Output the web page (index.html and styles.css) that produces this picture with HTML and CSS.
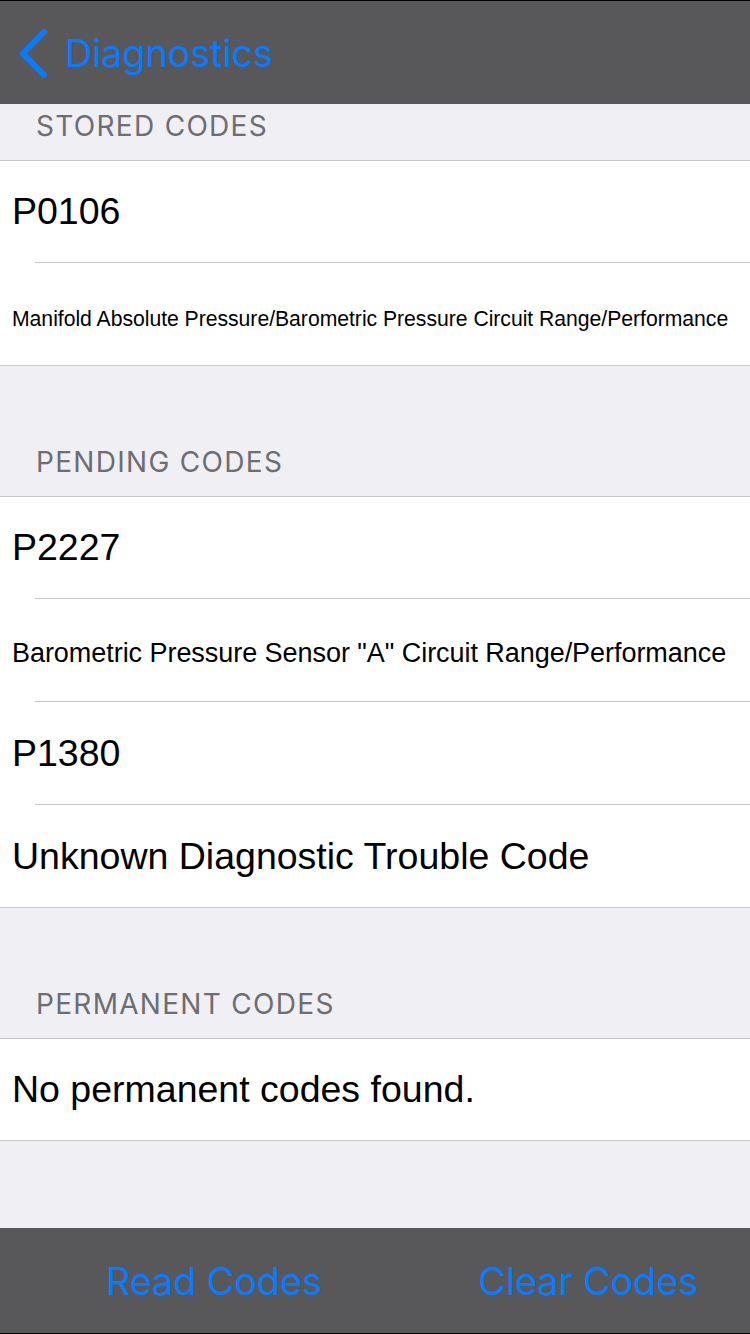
FILE: index.html
```html
<!DOCTYPE html>
<html>
<head>
<meta charset="utf-8">
<link rel="stylesheet" href="styles.css">
</head>
<body>
<div class="screen">
  <header class="navbar">
    <svg class="chevron" width="34" height="52" viewBox="0 0 34 52">
      <path d="M27 4 L6 25.5 L27 47" fill="none" stroke="#0a7aff" stroke-width="6" stroke-linecap="round" stroke-linejoin="round"/>
    </svg>
    <span class="nav-title">Diagnostics</span>
  </header>
  <main class="content">
    <div class="section-header first">STORED CODES</div>
    <div class="group">
      <div class="cell"><span class="code">P0106</span></div>
      <div class="cell desc-cell-a"><span class="desc desc-a">Manifold Absolute Pressure/Barometric Pressure Circuit Range/Performance</span></div>
    </div>
    <div class="section-header">PENDING CODES</div>
    <div class="group">
      <div class="cell"><span class="code">P2227</span></div>
      <div class="cell desc-cell-b"><span class="desc desc-b">Barometric Pressure Sensor "A" Circuit Range/Performance</span></div>
      <div class="cell"><span class="code">P1380</span></div>
      <div class="cell"><span class="code">Unknown Diagnostic Trouble Code</span></div>
    </div>
    <div class="section-header">PERMANENT CODES</div>
    <div class="group">
      <div class="cell"><span class="code">No permanent codes found.</span></div>
    </div>
  </main>
  <footer class="toolbar">
    <span class="tool-btn">Read Codes</span>
    <span class="tool-btn">Clear Codes</span>
  </footer>
</div>
</body>
</html>
```
FILE: styles.css
```css
html, body {
  margin: 0;
  padding: 0;
}
body {
  width: 750px;
  height: 1334px;
  overflow: hidden;
  background: #efeff4;
}
.screen {
  width: 750px;
  height: 1334px;
  display: flex;
  flex-direction: column;
  background: #efeff4;
}
.navbar {
  height: 103px;
  border-top: 1px solid #000;
  background: #58585a;
  display: flex;
  align-items: center;
  padding-left: 17px;
  flex: none;
}
.chevron {
  display: block;
  margin-right: 14px;
  margin-top: 2px;
}
.nav-title {
  font-family: Inter, "Noto Sans", sans-serif;
  font-size: 38px;
  color: #0a7aff;
  letter-spacing: -0.2px;
}
.content {
  flex: 1;
  display: flex;
  flex-direction: column;
}
.section-header {
  height: 131px;
  box-sizing: border-box;
  display: flex;
  align-items: flex-end;
  padding: 0 0 17px 36px;
  font-family: Inter, "Noto Sans", sans-serif;
  font-size: 28px;
  letter-spacing: 1.3px;
  color: #6d6d72;
  border-bottom: 1px solid #c8c7cc;
  flex: none;
}
.section-header.first {
  height: 57px;
}
.group {
  background: #fff;
  border-bottom: 1px solid #c8c7cc;
  flex: none;
}
.cell {
  height: 101px;
  display: flex;
  align-items: center;
  padding-left: 12px;
  position: relative;
  font-family: "Liberation Sans", Arial, sans-serif;
  color: #000;
}
.cell + .cell {
  height: 102px;
  margin-top: 1px;
}
.cell + .cell::before {
  content: "";
  position: absolute;
  top: -1px;
  left: 35px;
  right: 0;
  height: 1px;
  background: #c8c7cc;
}
.code {
  font-size: 37.5px;
}
.desc {
  white-space: nowrap;
}
.desc-cell-a {
  padding-top: 10px;
  box-sizing: border-box;
}
.desc-cell-b {
  padding-top: 6px;
  box-sizing: border-box;
}
.desc-a {
  font-size: 21.2px;
  letter-spacing: -0.03px;
}
.desc-b {
  font-size: 27px;
  letter-spacing: -0.05px;
}
.toolbar {
  height: 105px;
  border-bottom: 1px solid #000;
  background: #58585a;
  display: flex;
  align-items: center;
  justify-content: space-between;
  flex: none;
  padding: 0 52px 0 106px;
}
.tool-btn {
  font-family: Inter, "Noto Sans", sans-serif;
  font-size: 38px;
  letter-spacing: -0.2px;
  color: #0a7aff;
}
```
